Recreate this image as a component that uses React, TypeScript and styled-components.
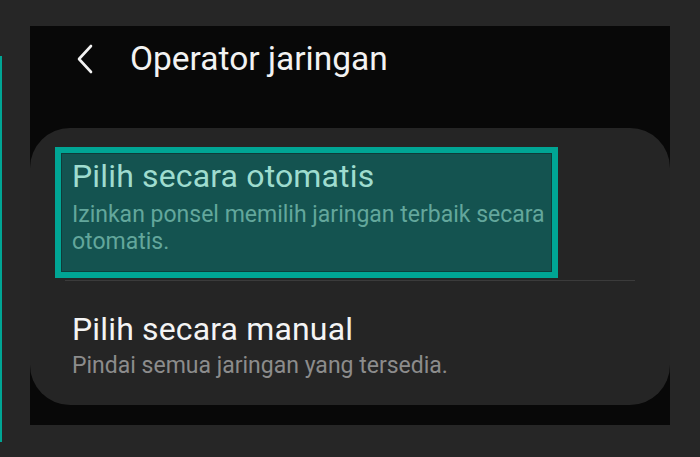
import React from 'react'
import styled, {createGlobalStyle} from 'styled-components'

const GlobalStyle = createGlobalStyle`
  html, body {
    margin: 0;
    padding: 0;
    background: #262626;
  }
  body {
    font-family: Roboto, "Noto Sans", "Liberation Sans", sans-serif;
  }
`

const Page = styled.div`
  display: flex;
  flex-direction: row;
  align-items: flex-start;
  width: 700px;
  height: 457px;
  padding-top: 26px;
  box-sizing: border-box;
  background: #262626;
  overflow: hidden;
`

const Rail = styled.div`
  width: 2px;
  height: 386px;
  margin-top: 30px;
  background: #00a594;
  flex-shrink: 0;
`

const Screen = styled.div`
  display: flex;
  flex-direction: column;
  width: 640px;
  height: 399px;
  margin-left: 28px;
  background: #080808;
  flex-shrink: 0;
`

const Header = styled.div`
  display: flex;
  align-items: center;
  height: 65px;
  padding-left: 46px;
  box-sizing: border-box;
`

const BackButton = styled.div`
  display: flex;
  align-items: center;
  justify-content: center;
  width: 18px;
  height: 30px;
  margin-right: 36px;
`

const Title = styled.h1`
  margin: 0;
  font-size: 33.5px;
  font-weight: 400;
  color: #f2f2f2;
`

const Card = styled.div`
  display: flex;
  flex-direction: column;
  margin-top: 37px;
  height: 277px;
  padding-top: 19px;
  box-sizing: border-box;
  background: #252525;
  border-radius: 40px;
`

const Item = styled.div<{focused?: boolean}>`
  display: flex;
  flex-direction: column;
  margin-left: 25px;
  width: 503px;
  box-sizing: border-box;
  border: 6px solid ${p => (p.focused ? '#00a594' : 'transparent')};
  background: ${p => (p.focused ? '#145350' : 'transparent')};
  box-shadow: ${p => (p.focused ? 'inset 0 0 0 1px #0e3d3a' : 'none')};
  padding: ${p => (p.focused ? '4px 0 17px 11px' : '23px 0 0 11px')};
  gap: ${p => (p.focused ? '6px' : '4px')};
`

const ItemTitle = styled.div<{focused?: boolean}>`
  font-size: 32px;
  line-height: 38px;
  letter-spacing: 0.15px;
  color: ${p => (p.focused ? '#9fdccf' : '#f4f4f4')};
`

const ItemText = styled.div<{focused?: boolean}>`
  font-size: 23px;
  line-height: 27px;
  color: ${p => (p.focused ? '#63a79c' : '#8c8c8c')};
  white-space: nowrap;
`

const Divider = styled.div`
  height: 1px;
  margin: 2px 0 0 35px;
  width: 570px;
  background: #3b3b3b;
`

const ChevronLeft = () => (
  <svg width="18" height="30" viewBox="0 0 18 30" fill="none">
    <path
      d="M15 2 L3 15 L15 28"
      stroke="#f2f2f2"
      strokeWidth="2.6"
      strokeLinecap="round"
      strokeLinejoin="round"
    />
  </svg>
)

const App = () => {
  return (
    <>
      <GlobalStyle />
      <Page>
        <Rail />
        <Screen>
          <Header>
            <BackButton>
              <ChevronLeft />
            </BackButton>
            <Title>Operator jaringan</Title>
          </Header>
          <Card>
            <Item focused>
              <ItemTitle focused>Pilih secara otomatis</ItemTitle>
              <ItemText focused>
                Izinkan ponsel memilih jaringan terbaik secara
                <br />
                otomatis.
              </ItemText>
            </Item>
            <Divider />
            <Item>
              <ItemTitle>Pilih secara manual</ItemTitle>
              <ItemText>Pindai semua jaringan yang tersedia.</ItemText>
            </Item>
          </Card>
        </Screen>
      </Page>
    </>
  )
}

export default App
